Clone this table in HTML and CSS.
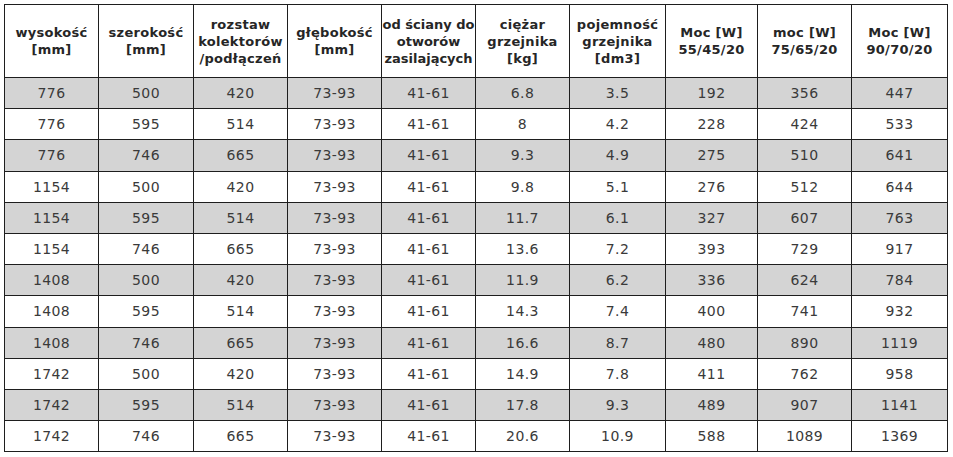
FILE: index.html
```html
<!DOCTYPE html>
<html lang="pl">
<head>
<meta charset="utf-8">
<link rel="stylesheet" href="styles.css">
</head>
<body>
<table class="spec">
<colgroup>
<col class="c1"><col class="c2"><col class="c3"><col class="c4"><col class="c5">
<col class="c6"><col class="c7"><col class="c8"><col class="c9"><col class="c10">
</colgroup>
<thead>
<tr class="head">
<th>wysokość<br>[mm]</th>
<th>szerokość<br>[mm]</th>
<th>rozstaw<br>kolektorów<br>/podłączeń</th>
<th>głębokość<br>[mm]</th>
<th class="tight">od ściany do<br>otworów<br>zasilających</th>
<th>ciężar<br>grzejnika<br>[kg]</th>
<th>pojemność<br>grzejnika<br>[dm3]</th>
<th>Moc [W]<br>55/45/20</th>
<th>moc [W]<br>75/65/20</th>
<th>Moc [W]<br>90/70/20</th>
</tr>
</thead>
<tbody>
<tr class="alt"><td>776</td><td>500</td><td>420</td><td>73-93</td><td>41-61</td><td>6.8</td><td>3.5</td><td>192</td><td>356</td><td>447</td></tr>
<tr><td>776</td><td>595</td><td>514</td><td>73-93</td><td>41-61</td><td>8</td><td>4.2</td><td>228</td><td>424</td><td>533</td></tr>
<tr class="alt"><td>776</td><td>746</td><td>665</td><td>73-93</td><td>41-61</td><td>9.3</td><td>4.9</td><td>275</td><td>510</td><td>641</td></tr>
<tr><td>1154</td><td>500</td><td>420</td><td>73-93</td><td>41-61</td><td>9.8</td><td>5.1</td><td>276</td><td>512</td><td>644</td></tr>
<tr class="alt"><td>1154</td><td>595</td><td>514</td><td>73-93</td><td>41-61</td><td>11.7</td><td>6.1</td><td>327</td><td>607</td><td>763</td></tr>
<tr><td>1154</td><td>746</td><td>665</td><td>73-93</td><td>41-61</td><td>13.6</td><td>7.2</td><td>393</td><td>729</td><td>917</td></tr>
<tr class="alt"><td>1408</td><td>500</td><td>420</td><td>73-93</td><td>41-61</td><td>11.9</td><td>6.2</td><td>336</td><td>624</td><td>784</td></tr>
<tr><td>1408</td><td>595</td><td>514</td><td>73-93</td><td>41-61</td><td>14.3</td><td>7.4</td><td>400</td><td>741</td><td>932</td></tr>
<tr class="alt"><td>1408</td><td>746</td><td>665</td><td>73-93</td><td>41-61</td><td>16.6</td><td>8.7</td><td>480</td><td>890</td><td>1119</td></tr>
<tr><td>1742</td><td>500</td><td>420</td><td>73-93</td><td>41-61</td><td>14.9</td><td>7.8</td><td>411</td><td>762</td><td>958</td></tr>
<tr class="alt"><td>1742</td><td>595</td><td>514</td><td>73-93</td><td>41-61</td><td>17.8</td><td>9.3</td><td>489</td><td>907</td><td>1141</td></tr>
<tr><td>1742</td><td>746</td><td>665</td><td>73-93</td><td>41-61</td><td>20.6</td><td>10.9</td><td>588</td><td>1089</td><td>1369</td></tr>
</tbody>
</table>
</body>
</html>
```
FILE: styles.css
```css
html, body {
  margin: 0;
  padding: 0;
  background: #ffffff;
}
body {
  padding: 4px;
  font-family: "DejaVu Sans", "Liberation Sans", sans-serif;
  color: #333333;
}
.spec {
  border-collapse: collapse;
  table-layout: fixed;
  width: 943px;
}
.c1 { width: 94px; }
.c2 { width: 95px; }
.c3 { width: 94px; }
.c4 { width: 94px; }
.c5 { width: 94px; }
.c6 { width: 94px; }
.c7 { width: 96px; }
.c8 { width: 92px; }
.c9 { width: 94px; }
.c10 { width: 96px; }
.spec th,
.spec td {
  border: 1.5px solid #1e1e1e;
  text-align: center;
  vertical-align: middle;
  padding: 0;
}
.spec th {
  height: 72px;
  font-weight: bold;
  font-size: 13px;
  line-height: 17px;
  color: #262626;
  letter-spacing: 0.3px;
  white-space: nowrap;
}
.spec th.tight {
  letter-spacing: 0;
}
.spec td {
  height: 30.2px;
  font-size: 14px;
  letter-spacing: 0.4px;
  color: #3a3a3a;
}
.spec tr.alt td {
  background: #d4d4d4;
}
```
